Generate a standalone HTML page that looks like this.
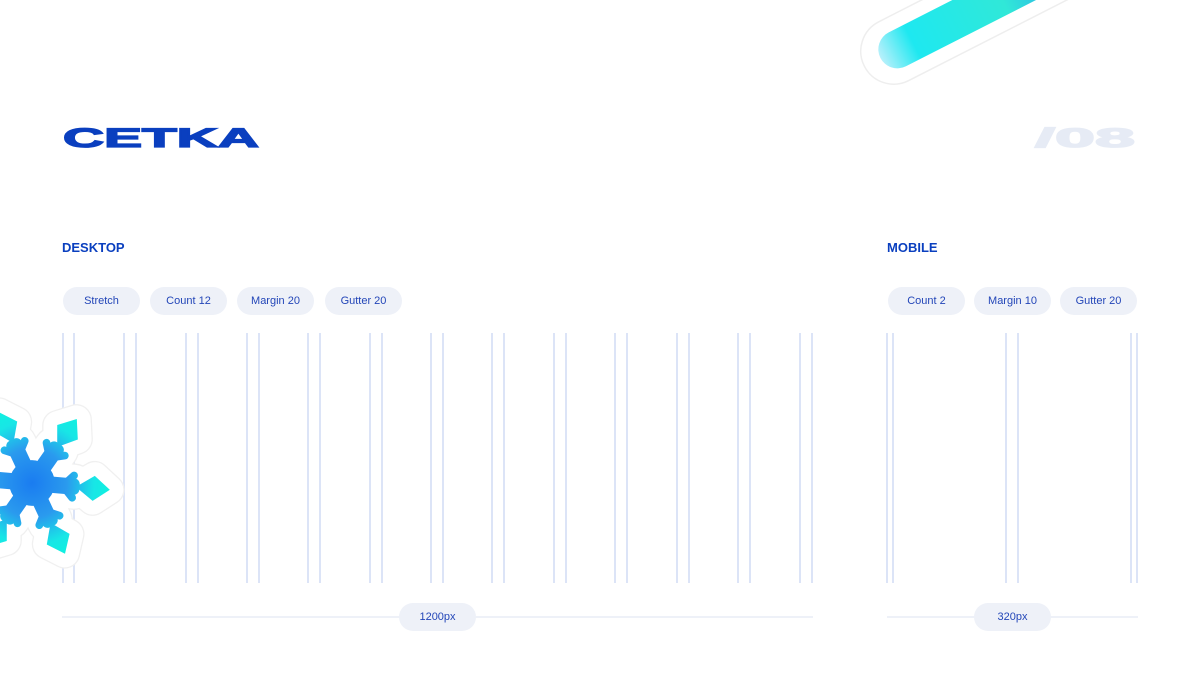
<!DOCTYPE html>
<html><head><meta charset="utf-8"><style>
*{margin:0;padding:0;box-sizing:border-box}
body{width:1200px;height:675px;background:#fff;position:relative;overflow:hidden;font-family:"Liberation Sans",sans-serif}
.chip{position:absolute;top:287px;height:28px;width:77px;border-radius:14px;background:#eef1f8;color:#2346b8;font-size:11px;line-height:28px;text-align:center}
.h{position:absolute;top:240px;font-size:13px;font-weight:bold;color:#0a3fbf}
.ln{position:absolute;top:333px;height:250px;width:2px;background:#dce4f7}
.ar{position:absolute;top:616px;height:2px;background:#eef1f8}
</style></head><body>
<svg style="position:absolute;left:0;top:0" width="1200" height="675">
<defs>
<linearGradient id="g1" x1="0" y1="0" x2="1" y2="0"><stop offset="0" stop-color="#b8f0fb"/><stop offset=".12" stop-color="#1ee8f0"/><stop offset=".45" stop-color="#30e8d8"/><stop offset=".75" stop-color="#2a8cf0"/><stop offset="1" stop-color="#4a7af0"/></linearGradient>
</defs>
<g transform="translate(900,48) rotate(-27)">
<rect x="-40" y="-33" width="320" height="66" rx="33" fill="#fff" stroke="#eeeeee" stroke-width="1.5"/>
<rect x="-22" y="-19" width="300" height="38" rx="19" fill="url(#g1)"/>
</g>
<text x="63" y="147" font-family="Liberation Sans" font-weight="bold" font-size="27" fill="#0a3fbf" stroke="#0a3fbf" stroke-width="1.3" textLength="196" lengthAdjust="spacingAndGlyphs">CETKA</text>
<text x="1035" y="147" font-family="Liberation Sans" font-weight="bold" font-size="27" fill="#e6ebf5" stroke="#e6ebf5" stroke-width="1.3" textLength="100" lengthAdjust="spacingAndGlyphs">/08</text>
</svg>
<div class="h" style="left:62px">DESKTOP</div>
<div class="h" style="left:887px">MOBILE</div>
<div class="chip" style="left:63px">Stretch</div>
<div class="chip" style="left:150px">Count 12</div>
<div class="chip" style="left:237px">Margin 20</div>
<div class="chip" style="left:325px">Gutter 20</div>
<div class="chip" style="left:888px">Count 2</div>
<div class="chip" style="left:974px">Margin 10</div>
<div class="chip" style="left:1060px">Gutter 20</div>
<div class="ln" style="left:62px"></div><div class="ln" style="left:73px"></div>
<div class="ln" style="left:123px"></div><div class="ln" style="left:135px"></div>
<div class="ln" style="left:185px"></div><div class="ln" style="left:197px"></div>
<div class="ln" style="left:246px"></div><div class="ln" style="left:258px"></div>
<div class="ln" style="left:307px"></div><div class="ln" style="left:319px"></div>
<div class="ln" style="left:369px"></div><div class="ln" style="left:381px"></div>
<div class="ln" style="left:430px"></div><div class="ln" style="left:442px"></div>
<div class="ln" style="left:491px"></div><div class="ln" style="left:503px"></div>
<div class="ln" style="left:553px"></div><div class="ln" style="left:565px"></div>
<div class="ln" style="left:614px"></div><div class="ln" style="left:626px"></div>
<div class="ln" style="left:676px"></div><div class="ln" style="left:688px"></div>
<div class="ln" style="left:737px"></div><div class="ln" style="left:749px"></div>
<div class="ln" style="left:799px"></div><div class="ln" style="left:811px"></div>
<div class="ln" style="left:886px"></div><div class="ln" style="left:892px"></div>
<div class="ln" style="left:1005px"></div><div class="ln" style="left:1017px"></div>
<div class="ln" style="left:1130px"></div><div class="ln" style="left:1136px"></div>
<div class="ar" style="left:62px;width:751px"></div>
<div class="ar" style="left:887px;width:251px"></div>
<div class="chip" style="left:399px;top:603px">1200px</div>
<div class="chip" style="left:974px;top:603px">320px</div>
<svg style="position:absolute;left:0;top:380px" width="160" height="220">
<defs>
<radialGradient id="g2" cx="0" cy="0" r="90" gradientUnits="userSpaceOnUse"><stop offset="0" stop-color="#1a7cf0"/><stop offset=".45" stop-color="#2a9aee"/><stop offset=".8" stop-color="#18e6e6"/><stop offset="1" stop-color="#10f0e0"/></radialGradient>
<g id="flake">
<rect x="-9" y="-55" width="18" height="110" rx="6"/>
<rect x="-9" y="-55" width="18" height="110" rx="6" transform="rotate(60)"/>
<rect x="-9" y="-55" width="18" height="110" rx="6" transform="rotate(120)"/>
<polygon points="0,-90 14,-72 0,-52 -14,-72"/>
<polygon points="0,-90 14,-72 0,-52 -14,-72" transform="rotate(60)"/>
<polygon points="0,-90 14,-72 0,-52 -14,-72" transform="rotate(120)"/>
<polygon points="0,-90 14,-72 0,-52 -14,-72" transform="rotate(180)"/>
<polygon points="0,-90 14,-72 0,-52 -14,-72" transform="rotate(240)"/>
<polygon points="0,-90 14,-72 0,-52 -14,-72" transform="rotate(300)"/>
<circle r="26"/>
<path d="M0,-36 L-13,-48 M0,-36 L13,-48" stroke-width="9" stroke-linecap="round"/>
<path d="M0,-36 L-13,-48 M0,-36 L13,-48" stroke-width="9" stroke-linecap="round" transform="rotate(60)"/>
<path d="M0,-36 L-13,-48 M0,-36 L13,-48" stroke-width="9" stroke-linecap="round" transform="rotate(120)"/>
<path d="M0,-36 L-13,-48 M0,-36 L13,-48" stroke-width="9" stroke-linecap="round" transform="rotate(180)"/>
<path d="M0,-36 L-13,-48 M0,-36 L13,-48" stroke-width="9" stroke-linecap="round" transform="rotate(240)"/>
<path d="M0,-36 L-13,-48 M0,-36 L13,-48" stroke-width="9" stroke-linecap="round" transform="rotate(300)"/>
</g>
</defs>
<g transform="translate(32,103) scale(0.86) rotate(-25)">
<use href="#flake" fill="#f0f0f0" stroke="#f0f0f0" stroke-width="36" stroke-linejoin="round"/>
<use href="#flake" fill="#fff" stroke="#fff" stroke-width="33" stroke-linejoin="round"/>
<use href="#flake" fill="url(#g2)" stroke="url(#g2)"/>
</g>
</svg>
</body></html>
